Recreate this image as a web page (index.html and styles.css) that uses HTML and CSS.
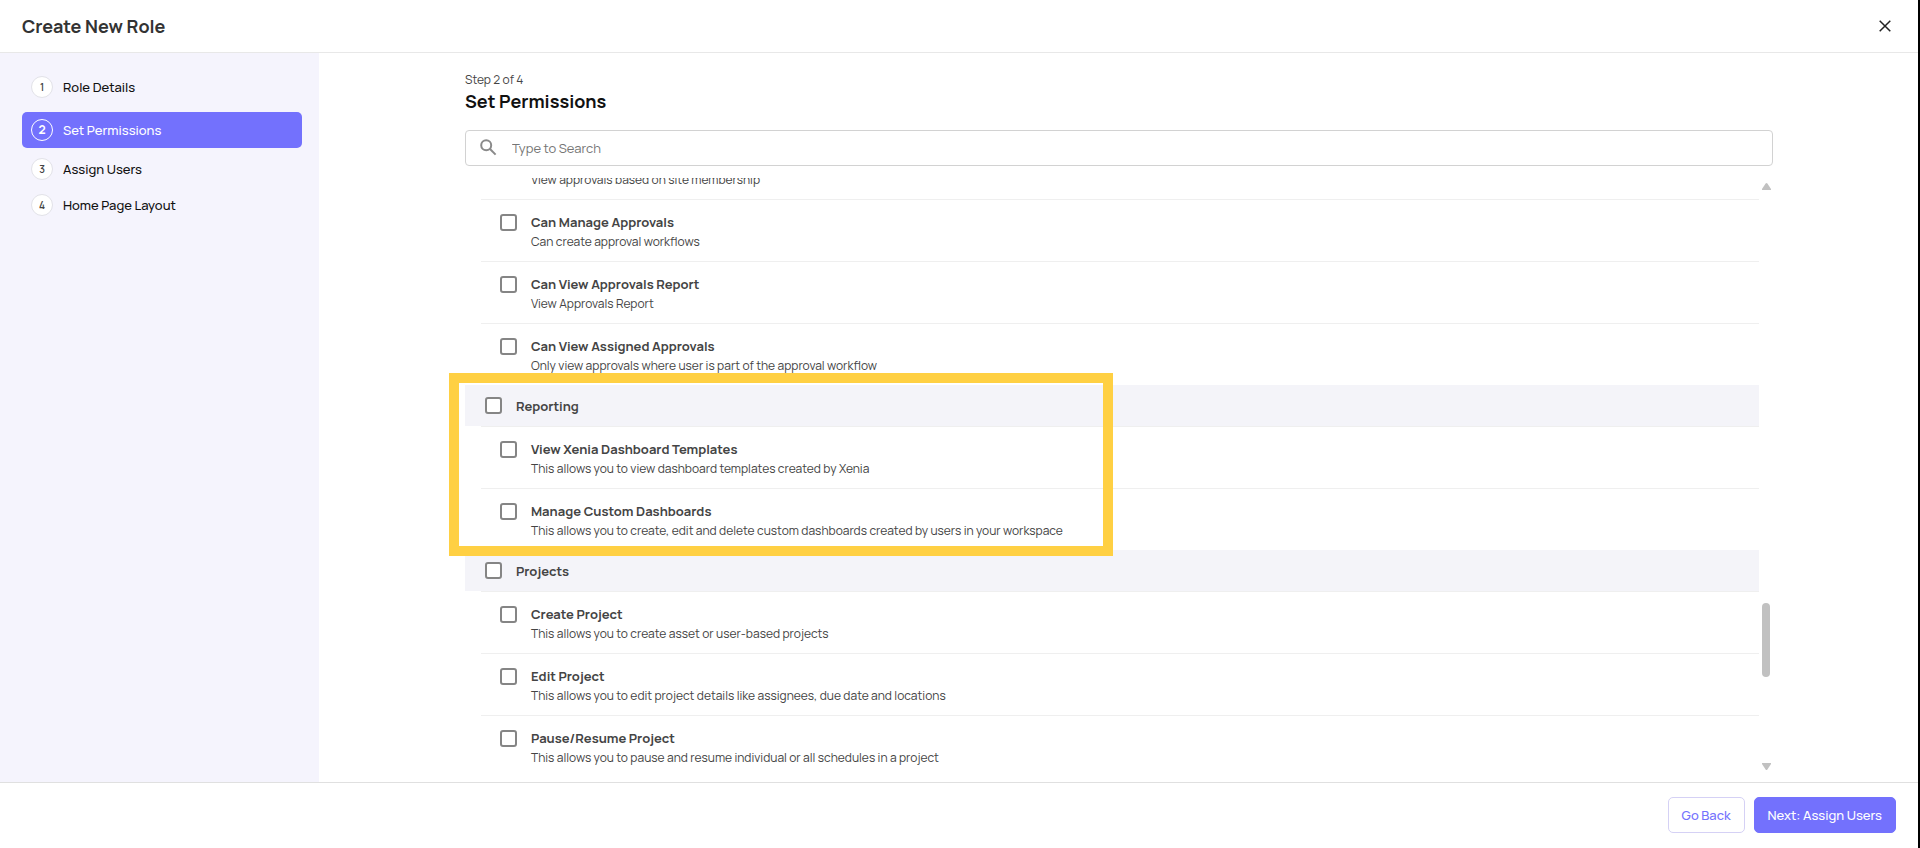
FILE: index.html
```
<!DOCTYPE html>
<html lang="en">
<head>
    <meta charset="UTF-8">
    <meta name="viewport" content="width=device-width, initial-scale=1.0">
    <title>Create New Role</title>
    <link rel="stylesheet" href="styles.css">
</head>
<body>
    <header class="header">
        <h1 class="header-title">Create New Role</h1>
        <button type="button" class="close-btn" aria-label="Close">
            <svg width="12" height="12" viewBox="0 0 12 12" fill="none" stroke="#222" stroke-width="1.5">
                <path d="M0.7 0.7L11.3 11.3M11.3 0.7L0.7 11.3"/>
            </svg>
        </button>
    </header>

    <div class="body">
        <nav class="sidebar">
            <a href="#" class="step"><span class="step-number">1</span>Role Details</a>
            <a href="#" class="step active"><span class="step-number">2</span>Set Permissions</a>
            <a href="#" class="step"><span class="step-number">3</span>Assign Users</a>
            <a href="#" class="step"><span class="step-number">4</span>Home Page Layout</a>
        </nav>

        <main class="content">
            <p class="step-count">Step 2 of 4</p>
            <h2 class="content-title">Set Permissions</h2>

            <div class="search">
                <svg width="17" height="19" viewBox="0 0 17 19" fill="none" stroke="#8a8a8a" stroke-width="2">
                    <circle cx="6.2" cy="6.2" r="5"/>
                    <path d="M10 10L15.6 15.6"/>
                </svg>
                <input type="text" class="search-input" placeholder="Type to Search" aria-label="Search permissions">
            </div>

            <div class="list-wrap">
                <div class="list">
                    <section class="group group-first">
                        <div class="row">
                            <p class="row-desc">View approvals based on site membership</p>
                        </div>
                        <div class="row">
                            <input type="checkbox" class="checkbox" id="manage-approvals">
                            <label class="row-title" for="manage-approvals">Can Manage Approvals</label>
                            <p class="row-desc">Can create approval workflows</p>
                        </div>
                        <div class="row">
                            <input type="checkbox" class="checkbox" id="approvals-report">
                            <label class="row-title" for="approvals-report">Can View Approvals Report</label>
                            <p class="row-desc">View Approvals Report</p>
                        </div>
                        <div class="row">
                            <input type="checkbox" class="checkbox" id="assigned-approvals">
                            <label class="row-title" for="assigned-approvals">Can View Assigned Approvals</label>
                            <p class="row-desc">Only view approvals where user is part of the approval workflow</p>
                        </div>
                    </section>

                    <section class="group">
                        <div class="group-header">
                            <input type="checkbox" class="checkbox" id="reporting">
                            <label class="row-title" for="reporting">Reporting</label>
                        </div>
                        <div class="row">
                            <input type="checkbox" class="checkbox" id="view-templates">
                            <label class="row-title" for="view-templates">View Xenia Dashboard Templates</label>
                            <p class="row-desc">This allows you to view dashboard templates created by Xenia</p>
                        </div>
                        <div class="row">
                            <input type="checkbox" class="checkbox" id="manage-dashboards">
                            <label class="row-title" for="manage-dashboards">Manage Custom Dashboards</label>
                            <p class="row-desc">This allows you to create, edit and delete custom dashboards created by users in your workspace</p>
                        </div>
                        <div class="highlight"></div>
                    </section>

                    <section class="group">
                        <div class="group-header">
                            <input type="checkbox" class="checkbox" id="projects">
                            <label class="row-title" for="projects">Projects</label>
                        </div>
                        <div class="row">
                            <input type="checkbox" class="checkbox" id="create-project">
                            <label class="row-title" for="create-project">Create Project</label>
                            <p class="row-desc">This allows you to create asset or user-based projects</p>
                        </div>
                        <div class="row">
                            <input type="checkbox" class="checkbox" id="edit-project">
                            <label class="row-title" for="edit-project">Edit Project</label>
                            <p class="row-desc">This allows you to edit project details like assignees, due date and locations</p>
                        </div>
                        <div class="row">
                            <input type="checkbox" class="checkbox" id="pause-project">
                            <label class="row-title" for="pause-project">Pause/Resume Project</label>
                            <p class="row-desc">This allows you to pause and resume individual or all schedules in a project</p>
                        </div>
                    </section>
                </div>

                <div class="scrollbar">
                    <svg width="9" height="7" viewBox="0 0 9 7" fill="#c1c1c1"><path d="M3.6 0.5Q4.5 -0.5 5.4 0.5L9 6V7H0V6Z"/></svg>
                    <div class="scroll-track">
                        <div class="scroll-thumb"></div>
                    </div>
                    <svg width="9" height="7" viewBox="0 0 9 7" fill="#c1c1c1"><path d="M3.6 6.5Q4.5 7.5 5.4 6.5L9 1V0H0V1Z"/></svg>
                </div>
            </div>
        </main>
    </div>

    <footer class="footer">
        <button type="button" class="btn btn-outline">Go Back</button>
        <button type="button" class="btn btn-primary">Next: Assign Users</button>
    </footer>
</body>
</html>
```
FILE: styles.css
```
* {
    margin: 0;
    padding: 0;
    box-sizing: border-box;
}

body {
    font-family: Manrope, Inter, 'Liberation Sans', sans-serif;
    font-size: 12px;
    line-height: 16px;
    color: #222;
    background: white;
    height: 100vh;
    display: flex;
    flex-direction: column;
    border-right: 2px solid #000;
}

.header {
    display: flex;
    align-items: center;
    justify-content: space-between;
    padding: 14px 27px 14px 22px;
    border-bottom: 1px solid #e8e8e8;
}

.header-title {
    font-size: 18px;
    line-height: 24px;
    font-weight: 700;
    color: #333;
}

.close-btn {
    display: flex;
    background: none;
    border: none;
    cursor: pointer;
}

.body {
    flex: 1;
    min-height: 0;
    display: flex;
}

.sidebar {
    width: 319px;
    flex-shrink: 0;
    padding: 16px 17px 16px 22px;
    background: #f5f4fd;
}

.step {
    display: flex;
    align-items: center;
    gap: 10px;
    height: 36px;
    padding: 0 9px;
    border-radius: 5px;
    font-size: 13px;
    font-weight: 500;
    color: #111;
    text-decoration: none;
}

.step.active {
    margin: 7px 0 3px;
    background: #7371fd;
    color: white;
}

.step-number {
    display: flex;
    align-items: center;
    justify-content: center;
    width: 22px;
    height: 22px;
    border: 1px solid #e2e2e8;
    border-radius: 50%;
    background: white;
    color: #444;
    font-size: 10px;
    font-weight: 600;
}

.step.active .step-number {
    border-color: white;
    background: none;
    color: white;
    font-size: 12px;
    font-weight: 700;
}

.content {
    flex: 1;
    min-width: 0;
    display: flex;
    flex-direction: column;
    padding: 19px 145px 8px 146px;
}

.step-count {
    color: #444;
}

.content-title {
    margin-top: 1px;
    font-size: 18px;
    line-height: 24px;
    font-weight: 700;
    color: #111;
}

.search {
    display: flex;
    align-items: center;
    gap: 15px;
    height: 36px;
    margin-top: 17px;
    padding: 0 14px;
    border: 1px solid #d2d2d2;
    border-radius: 4px;
}

.search-input {
    flex: 1;
    border: none;
    outline: none;
    background: none;
    font-family: inherit;
    font-size: 13px;
}

.search-input::placeholder {
    color: #757575;
}

.list-wrap {
    flex: 1;
    min-height: 0;
    display: flex;
    margin-top: 12px;
}

.list {
    flex: 1;
    overflow-x: visible;
    overflow-y: clip;
}

.group {
    position: relative;
}

/* list is scrolled part way through the approvals group */
.group-first {
    margin-top: -41px;
}

.group-header {
    display: flex;
    align-items: center;
    gap: 14px;
    height: 41px;
    padding-left: 20px;
    background: #f4f4f9;
}

.row {
    display: grid;
    grid-template-columns: 16px 1fr;
    grid-template-rows: 18px 16px;
    column-gap: 15px;
    row-gap: 3px;
    align-items: center;
    height: 62px;
    margin-left: 16px;
    padding: 13px 0 0 19px;
    border-top: 1px solid #efefef;
}

.row-title {
    font-size: 13px;
    font-weight: 700;
    color: #444;
}

.row-desc {
    grid-column: 2;
    grid-row: 2;
    color: #444;
}

.checkbox {
    appearance: none;
    width: 17px;
    height: 17px;
    border: 2px solid #858585;
    border-radius: 3px;
    background: white;
}

/* callout drawn over the reporting group */
.highlight {
    position: absolute;
    top: -12px;
    bottom: -6px;
    left: -16px;
    width: 664px;
    border: 10px solid #ffd043;
    pointer-events: none;
    z-index: 1;
}

.scrollbar {
    display: flex;
    flex-direction: column;
    align-items: center;
    width: 14px;
    padding: 5px 0 4px;
}

.scroll-track {
    flex: 1;
    display: flex;
    align-items: flex-start;
}

.scroll-thumb {
    width: 8px;
    height: 74px;
    margin-top: 413px;
    border-radius: 4px;
    background: #c1c1c1;
}

.footer {
    display: flex;
    align-items: center;
    justify-content: flex-end;
    gap: 9px;
    padding: 14px 22px 15px;
    border-top: 1px solid #e0e0e0;
}

.btn {
    height: 36px;
    padding: 0 13px;
    border: 1px solid #7371fd;
    border-radius: 5px;
    font-family: inherit;
    font-size: 13px;
    font-weight: 500;
    cursor: pointer;
}

.btn-outline {
    border-color: #d5d1f5;
    background: white;
    color: #7371fd;
}

.btn-primary {
    background: #7371fd;
    color: white;
}
```
